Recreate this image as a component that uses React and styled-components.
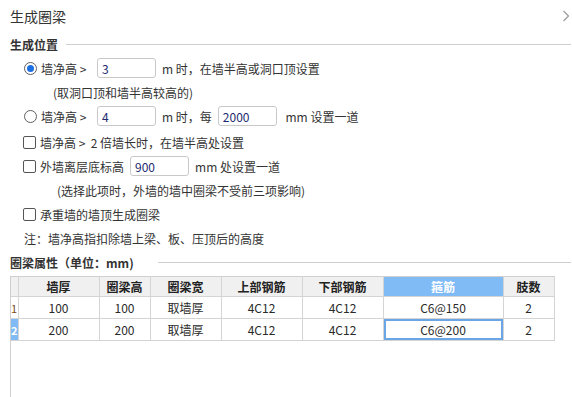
import React from "react"
import styled, { createGlobalStyle } from "styled-components"

const Global = createGlobalStyle`
  html, body {
    margin: 0;
    padding: 0;
    background: #fff;
  }
  body {
    font-family: "Noto Sans CJK SC", "Microsoft YaHei", sans-serif;
    font-size: 12px;
    color: #333;
  }
`

const Dialog = styled.div`
  width: 572px;
  height: 397px;
  overflow: hidden;
  display: flex;
  flex-direction: column;
`

const TitleBar = styled.div`
  height: 32px;
  flex: none;
  padding: 0 2px 0 10px;
  display: flex;
  align-items: center;
  justify-content: space-between;
  font-size: 14px;
  color: #333;
`

const Body = styled.div`
  flex: 1;
  padding: 0 1px 0 10px;
  display: flex;
  flex-direction: column;
`

const SectionTitle = styled.div`
  height: 24px;
  flex: none;
  display: flex;
  align-items: center;
  font-weight: bold;
  color: #333;
  &::after {
    content: "";
    flex: 1;
    height: 1px;
    background: #cfcfcf;
    margin-left: ${(p) => p.$gap || 8}px;
  }
`

const Options = styled.div`
  padding-left: 13px;
  display: flex;
  flex-direction: column;
`

const Row = styled.div`
  height: 24px;
  display: flex;
  align-items: center;
  white-space: pre;
  margin-top: ${(p) => p.$mt || 0}px;
`

const Note = styled.div`
  height: 24px;
  display: flex;
  align-items: center;
  padding-left: ${(p) => p.$indent || 0}px;
`

const Radio = styled.span`
  width: 13px;
  height: 13px;
  box-sizing: border-box;
  border: 1px solid #5f5f5f;
  border-radius: 50%;
  margin: 0 4px 0 1px;
  display: inline-flex;
  align-items: center;
  justify-content: center;
  &::after {
    content: "";
    width: 7px;
    height: 7px;
    border-radius: 50%;
    background: ${(p) => (p.$checked ? "#1b6fe0" : "transparent")};
  }
`

const Check = styled.span`
  width: 13px;
  height: 13px;
  box-sizing: border-box;
  border: 1px solid #555;
  border-radius: 2px;
  margin-right: 4px;
`

const Label = styled.span`
  display: inline-block;
  min-width: ${(p) => p.$w || 0}px;
`

const Field = styled.input`
  width: 59px;
  height: 20px;
  box-sizing: border-box;
  border: 1px solid #c9c9c9;
  border-radius: 3px;
  padding: 0 4px;
  margin: 0 6px;
  font-family: inherit;
  font-size: 12px;
  color: #1d2a6e;
  outline: none;
`

const Grid = styled.div`
  margin-top: 2px;
  flex: 1;
  border-left: 1px solid #cfcfcf;
`

const Table = styled.table`
  border-collapse: collapse;
  table-layout: fixed;
  border-top: 1px solid #cfcfcf;
  width: 543px;
  td, th {
    border: 1px solid #d4d4d4;
    padding: 0;
    text-align: center;
    font-size: 12px;
    white-space: nowrap;
  }
  tr:first-child th {
    border-top: none;
  }
  tr td:first-child,
  tr th:first-child {
    border-left: none;
  }
`

const Head = styled.th`
  height: 19px;
  background: ${(p) => (p.$active ? "#80bbf6" : "#f0f0f0")};
  color: ${(p) => (p.$active ? "#fff" : "#222")};
  font-weight: 600;
`

const Cell = styled.td`
  height: 21px;
  color: #2a2a2a;
  box-shadow: ${(p) => (p.$selected ? "inset 0 0 0 2px #6aa6e6" : "none")};
`

const RowNum = styled.td`
  height: 21px;
  text-align: left !important;
  font-size: 11px !important;
  background: ${(p) => (p.$active ? "#80bbf6" : "#fff")};
  color: ${(p) => (p.$active ? "#fff" : "#7a4a1a")};
  font-weight: ${(p) => (p.$active ? "bold" : "normal")};
`

const cols = [7, 81, 51, 71, 81, 81, 120, 51]
const heads = ["墙厚", "圈梁高", "圈梁宽", "上部钢筋", "下部钢筋", "箍筋", "肢数"]
const rows = [
  ["100", "100", "取墙厚", "4C12", "4C12", "C6@150", "2"],
  ["200", "200", "取墙厚", "4C12", "4C12", "C6@200", "2"],
]

const Chevron = () => (
  <svg width="8" height="12" viewBox="0 0 8 12">
    <path d="M1.5 1 L6.5 6 L1.5 11" fill="none" stroke="#9a9a9a" strokeWidth="1.2" />
  </svg>
)

export default function App() {
  return (
    <Dialog>
      <Global />
      <TitleBar>
        <span>生成圈梁</span>
        <Chevron />
      </TitleBar>
      <Body>
        <SectionTitle>生成位置</SectionTitle>
        <Options>
          <Row>
            <Radio $checked />
            <Label $w={50}>墙净高 &gt;</Label>
            <Field defaultValue="3" />
            <span>m 时，在墙半高或洞口顶设置</span>
          </Row>
          <Note $indent={30}>(取洞口顶和墙半高较高的)</Note>
          <Row>
            <Radio />
            <Label $w={50}>墙净高 &gt;</Label>
            <Field defaultValue="4" />
            <span>m 时，每</span>
            <Field defaultValue="2000" />
            <span> mm 设置一道</span>
          </Row>
          <Row $mt={2}>
            <Check />
            <span>墙净高 &gt;  2 倍墙长时，在墙半高处设置</span>
          </Row>
          <Row>
            <Check />
            <span>外墙离层底标高</span>
            <Field defaultValue="900" />
            <span>mm 处设置一道</span>
          </Row>
          <Note $indent={34}>(选择此项时，外墙的墙中圈梁不受前三项影响)</Note>
          <Row>
            <Check />
            <span>承重墙的墙顶生成圈梁</span>
          </Row>
          <Note $indent={1}>注：墙净高指扣除墙上梁、板、压顶后的高度</Note>
        </Options>
        <SectionTitle $gap={24}>圈梁属性（单位：mm)</SectionTitle>
        <Grid>
          <Table>
            <colgroup>
              {cols.map((w, i) => (
                <col key={i} style={{ width: w }} />
              ))}
            </colgroup>
            <thead>
              <tr>
                <Head />
                {heads.map((h, i) => (
                  <Head key={h} $active={i === 5}>
                    {h}
                  </Head>
                ))}
              </tr>
            </thead>
            <tbody>
              {rows.map((r, ri) => (
                <tr key={ri}>
                  <RowNum $active={ri === 1}>{ri + 1}</RowNum>
                  {r.map((c, ci) => (
                    <Cell key={ci} $selected={ri === 1 && ci === 5}>
                      {c}
                    </Cell>
                  ))}
                </tr>
              ))}
            </tbody>
          </Table>
        </Grid>
      </Body>
    </Dialog>
  )
}
